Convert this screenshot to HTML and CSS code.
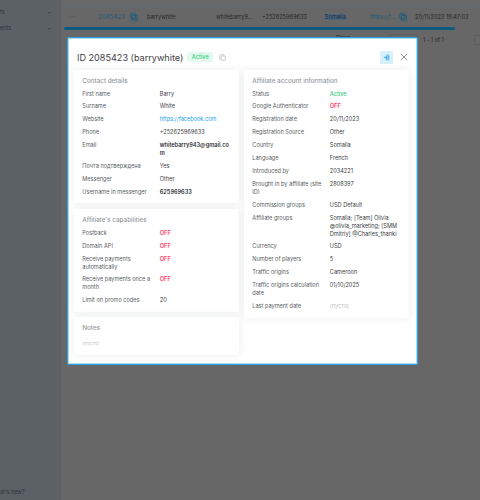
FILE: index.html
```html
<!DOCTYPE html>
<html lang="en">
<head>
<meta charset="utf-8">
<title>Affiliate 2085423</title>
<link rel="stylesheet" href="styles.css">
</head>
<body>
<div class="page">
  <aside class="sidebar">
    <div class="nav-item"><span>ts</span><svg class="chev" viewBox="0 0 8 5"><path d="M1 1l3 3 3-3"/></svg></div>
    <div class="nav-item"><span>ents</span><svg class="chev" viewBox="0 0 8 5"><path d="M1 1l3 3 3-3"/></svg></div>
    <div class="whats-new">at's new?</div>
  </aside>
  <main class="main">
    <div class="table-row">
      <span class="dots">•••</span>
      <span class="cell-id">2085423</span>
      <span class="copy-box"><svg viewBox="0 0 10 10"><rect x="1" y="1" width="6" height="6" rx="1"/><rect x="3" y="3" width="6" height="6" rx="1"/></svg></span>
      <span class="cell-user">barrywhite</span>
      <span class="cell-mail">whitebarry9...</span>
      <span class="cell-phone">+252625969633</span>
      <span class="cell-country"><span class="selected">Somalia</span></span>
      <span class="cell-link">https://f...</span>
      <span class="copy-box"><svg viewBox="0 0 10 10"><rect x="1" y="1" width="6" height="6" rx="1"/><rect x="3" y="3" width="6" height="6" rx="1"/></svg></span>
      <span class="cell-date">20/11/2023 18:47:03</span>
    </div>
    <div class="scrollbar"></div>
    <div class="pager"><span class="pager-label">Rows</span><span class="pager-box"></span><span class="pager-text">1 - 1 of 1</span><span class="pager-btn"></span></div>
  </main>
</div>

<section class="modal">
  <header class="modal-head">
    <h1 class="modal-title">ID 2085423 (barrywhite)</h1>
    <span class="badge">Active</span>
    <svg class="copy-grey" viewBox="0 0 10 10"><rect x="1" y="1" width="6" height="6" rx="1"/><rect x="3" y="3" width="6" height="6" rx="1"/></svg>
    <span class="head-space"></span>
    <span class="action"><svg viewBox="0 0 10 10"><path d="M1 5h3M2.8 3.4L4.4 5 2.8 6.6"/><rect x="5" y="1.5" width="3.4" height="7" rx=".6"/><path d="M5.2 4h3M5.2 6h3"/></svg></span>
    <svg class="close" viewBox="0 0 10 10"><path d="M1 1l8 8M9 1l-8 8"/></svg>
  </header>
  <div class="columns">
    <div class="col">
      <div class="card">
        <h2 class="card-title">Contact details</h2>
        <div class="row"><span class="k">First name</span><span class="v">Barry</span></div>
        <div class="row"><span class="k">Surname</span><span class="v">White</span></div>
        <div class="row"><span class="k">Website</span><span class="v link">https://facebook.com</span></div>
        <div class="row"><span class="k">Phone</span><span class="v">+252625969633</span></div>
        <div class="row"><span class="k">Email</span><span class="v strong">whitebarry943@gmail.com</span></div>
        <div class="row"><span class="k">Почта подтверждена</span><span class="v">Yes</span></div>
        <div class="row"><span class="k">Messenger</span><span class="v">Other</span></div>
        <div class="row"><span class="k">Username in messenger</span><span class="v strong">625969633</span></div>
      </div>
      <div class="card">
        <h2 class="card-title">Affiliate's capabilities</h2>
        <div class="row"><span class="k">Postback</span><span class="v off">OFF</span></div>
        <div class="row"><span class="k">Domain API</span><span class="v off">OFF</span></div>
        <div class="row"><span class="k">Receive payments automatically</span><span class="v off">OFF</span></div>
        <div class="row"><span class="k">Receive payments once a month</span><span class="v off">OFF</span></div>
        <div class="row"><span class="k">Limit on promo codes</span><span class="v">20</span></div>
      </div>
      <div class="card">
        <h2 class="card-title">Notes</h2>
        <div class="empty">(пусто)</div>
      </div>
    </div>
    <div class="col">
      <div class="card">
        <h2 class="card-title">Affiliate account information</h2>
        <div class="row"><span class="k">Status</span><span class="v on">Active</span></div>
        <div class="row"><span class="k">Google Authenticator</span><span class="v off">OFF</span></div>
        <div class="row"><span class="k">Registration date</span><span class="v">20/11/2023</span></div>
        <div class="row"><span class="k">Registration Source</span><span class="v">Other</span></div>
        <div class="row"><span class="k">Country</span><span class="v">Somalia</span></div>
        <div class="row"><span class="k">Language</span><span class="v">French</span></div>
        <div class="row"><span class="k">Introduced by</span><span class="v">2034221</span></div>
        <div class="row"><span class="k">Brought in by affiliate (site ID)</span><span class="v">2808397</span></div>
        <div class="row"><span class="k">Commission groups</span><span class="v">USD Default</span></div>
        <div class="row"><span class="k">Affiliate groups</span><span class="v">Somalia; [Team] Olivia @olivia_marketing; [SMM Dmitriy] @Charles_thanki</span></div>
        <div class="row"><span class="k">Currency</span><span class="v">USD</span></div>
        <div class="row"><span class="k">Number of players</span><span class="v">5</span></div>
        <div class="row"><span class="k">Traffic origins</span><span class="v">Cameroon</span></div>
        <div class="row"><span class="k">Traffic origins calculation date</span><span class="v">01/10/2025</span></div>
        <div class="row"><span class="k">Last payment date</span><span class="v muted">(пусто)</span></div>
      </div>
    </div>
  </div>
</section>
</body>
</html>
```

FILE: styles.css
```css
* { box-sizing: border-box; }
html, body { margin: 0; height: 500px; overflow: hidden; }
body { font-family: Inter, "Liberation Sans", sans-serif; background: #676767; color: #2d2f33; }

.page { display: flex; height: 500px; }
.sidebar { width: 61px; background: #5c6166; border-right: 1px solid #585c60; padding-top: 4px; display: flex; flex-direction: column; font-size: 5.5px; color: #2f3338; }
.nav-item { height: 16px; display: flex; align-items: center; justify-content: flex-end; padding-right: 8px; gap: 30px; }
.nav-item span { margin-right: auto; }
.chev { width: 5px; height: 3px; fill: none; stroke: #33373c; stroke-width: 1.2; }
.whats-new { margin-top: auto; height: 11px; font-size: 5.5px; }

.main { flex: 1; min-width: 0; padding: 6px 0 0 3px; background: #676767; overflow: hidden; }
.table-row { height: 20px; border-top: 1px solid #5f6c74; display: flex; align-items: center; font-size: 5.6px; color: #26282a; white-space: nowrap; }
.dots { width: 34px; padding-left: 5px; font-size: 4px; color: #54585c; letter-spacing: .5px; }
.cell-id { font-size: 6.2px; color: #1f5b7a; width: 31px; }
.copy-box { flex: none; width: 10px; height: 12px; background: #5f676c; display: flex; align-items: center; justify-content: center; }
.copy-box svg { width: 8px; height: 8px; fill: none; stroke: #1f5b7a; stroke-width: 1.2; }
.cell-user { flex: none; width: 69px; margin-left: 8px; }
.cell-mail { flex: none; width: 46px; }
.cell-phone { flex: none; width: 63px; }
.cell-country { flex: none; width: 45px; }
.selected { background: #4a6788; }
.cell-link { flex: none; width: 28px; color: #1f5b7a; }
.cell-date { flex: none; margin-left: 7px; }
.scrollbar { height: 3px; width: 391px; margin-top: 1px; background: #0d5a82; border-radius: 2px; }
.pager { display: flex; align-items: flex-start; font-size: 5.5px; color: #26282a; margin-top: 3.5px; padding-left: 272px; height: 16px; }
.pager-label { flex: none; width: 53px; line-height: 6px; margin-top: 1px; }
.pager-box { flex: none; width: 29px; height: 14px; border: 1px solid #5a5f63; border-radius: 2px; margin-right: 5px; }
.pager-text { flex: none; width: 51px; margin-top: 3px; }
.pager-btn { flex: none; width: 10px; height: 10px; border: 1px solid #5a5f63; margin-top: 1px; }

.modal { position: absolute; left: 67px; top: 37px; width: 351px; height: 328px; padding: 1px; background: #fff; border: 1px solid #2f9fe0; border-radius: 2px; box-shadow: inset 0 0 0 1px #a6dbf6; }
.modal-head { display: flex; align-items: center; height: 30.5px; padding: 6px 6px 0 8px; }
.modal-title { margin: 0; font-size: 9.1px; font-weight: 400; color: #3f4145; white-space: nowrap; }
.badge { margin-left: 4px; background: #e4f9ee; color: #2fd07c; font-size: 5.6px; font-weight: 500; height: 10px; line-height: 10px; padding: 0 4.5px; border-radius: 3px; }
.copy-grey { width: 7px; height: 7px; margin-left: 5.5px; fill: #fff; stroke: #b4b6ba; stroke-width: 1; }
.head-space { flex: 1; }
.action { width: 13px; height: 13px; background: #d8effc; display: flex; align-items: center; justify-content: center; margin-right: 7px; }
.action svg { width: 7px; height: 7px; fill: none; stroke: #4db3ea; stroke-width: 1.4; }
.close { width: 8px; height: 8px; fill: none; stroke: #6d7278; stroke-width: 1; margin-right: 2px; }

.columns { display: flex; gap: 5.5px; padding: 0 6px 0 5.3px; align-items: flex-start; }
.col { width: 164.5px; display: flex; flex-direction: column; gap: 5.5px; }
.card { background: #fff; box-shadow: 0 0 8px rgba(40, 50, 70, .09); border-radius: 2px; padding: 7px 7px 2.7px 8px; }
.card-title { margin: 0 0 5px; font-size: 6.3px; line-height: 8px; font-weight: 500; color: #94979d; }
.row { display: grid; grid-template-columns: 73.5px 1fr; column-gap: 4px; font-size: 5.6px; line-height: 8px; padding-bottom: 4.9px; color: #5a5d62; }
.k { min-width: 0; }
.v { color: #3c3e42; overflow-wrap: anywhere; }
.strong { font-weight: 600; color: #2d2f33; }
.link { color: #1ba3ea; }
.on { color: #2fd07c; font-weight: 500; }
.off { color: #ff3d64; font-weight: 600; }
.muted, .empty { color: #c2c4c8; }
.empty { font-size: 5px; line-height: 8px; padding: 1.3px 0 5.5px; }
```
